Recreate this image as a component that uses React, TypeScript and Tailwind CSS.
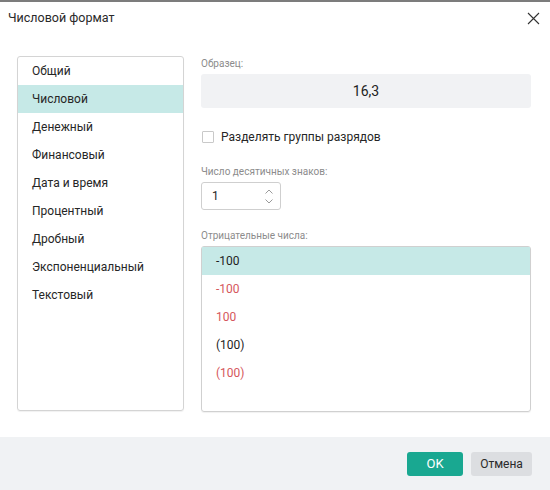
import { ReactNode } from "react";

// ── data ──────────────────────────────────────────────────────────────────────
const categories = [
  "Общий",
  "Числовой",
  "Денежный",
  "Финансовый",
  "Дата и время",
  "Процентный",
  "Дробный",
  "Экспоненциальный",
  "Текстовый",
];

const negatives: { label: string; red: boolean }[] = [
  { label: "-100", red: false },
  { label: "-100", red: true },
  { label: "100", red: true },
  { label: "(100)", red: false },
  { label: "(100)", red: true },
];

// ── FieldLabel ────────────────────────────────────────────────────────────────
function FieldLabel({ children }: { children: ReactNode }) {
  return <div className="text-[10px] leading-[13px] text-[#8c8c8c]">{children}</div>;
}

// ── Chevron ───────────────────────────────────────────────────────────────────
function Chevron({ up }: { up?: boolean }) {
  return (
    <svg width="8" height="5" viewBox="0 0 8 5" fill="none">
      <path
        d={up ? "M0.5 4.5 L4 1 L7.5 4.5" : "M0.5 0.5 L4 4 L7.5 0.5"}
        stroke="#9a9a9a"
        strokeWidth="1"
      />
    </svg>
  );
}

export default function App() {
  return (
    <div className="w-[550px] h-[490px] bg-white flex flex-col border-t-2 border-[#7c7c7c] font-['Segoe_UI','Roboto',sans-serif] text-[12px] text-[#262626] overflow-hidden">
      {/* header */}
      <div className="h-[32px] flex items-center justify-between pl-2 pr-[10px]">
        <span className="text-[12.5px] text-[#2a2a2a]">Числовой формат</span>
        <svg width="13" height="13" viewBox="0 0 13 13" fill="none">
          <path d="M1 1 L12 12 M12 1 L1 12" stroke="#333" strokeWidth="1.1" />
        </svg>
      </div>

      {/* body */}
      <div className="flex-1 flex gap-[17px] pl-[17px] pt-[22px]">
        {/* category list */}
        <div className="w-[167px] h-[355px] border border-[#d4d4d4] rounded-[3px] shadow-[0_1px_1px_rgba(0,0,0,0.06)]">
          {categories.map((c, i) => (
            <div
              key={c}
              className={`h-[28px] flex items-center pl-[14px] ${i === 1 ? "bg-[#c6e9e7]" : ""}`}
            >
              {c}
            </div>
          ))}
        </div>

        {/* settings */}
        <div className="w-[330px] flex flex-col">
          <div className="pt-[1px]">
            <FieldLabel>Образец:</FieldLabel>
          </div>
          <div className="mt-[4px] h-[34px] rounded-[3px] bg-[#f1f2f4] flex items-center justify-center text-[14px] text-[#222]">
            16,3
          </div>

          <div className="mt-[20px] flex items-center gap-[7px] pl-[1px]">
            <div className="w-[12px] h-[12px] border border-[#c9c9c9] rounded-[1px] bg-white" />
            <span>Разделять группы разрядов</span>
          </div>

          <div className="mt-[19px]">
            <FieldLabel>Число десятичных знаков:</FieldLabel>
          </div>
          <div className="mt-[4px] w-[80px] h-[28px] border border-[#cfcfcf] rounded-[3px] flex items-center justify-between pl-[10px] pr-[7px]">
            <span>1</span>
            <div className="flex flex-col gap-[5px]">
              <Chevron up />
              <Chevron />
            </div>
          </div>

          <div className="mt-[19px]">
            <FieldLabel>Отрицательные числа:</FieldLabel>
          </div>
          <div className="mt-[4px] h-[166px] border border-[#d0d0d0] rounded-[3px] shadow-[0_1px_1px_rgba(0,0,0,0.06)]">
            {negatives.map((n, i) => (
              <div
                key={i}
                className={`h-[28px] flex items-center pl-[14px] ${i === 0 ? "bg-[#c6e9e7]" : ""} ${
                  n.red ? "text-[#d5575c]" : "text-[#1e1e1e]"
                }`}
              >
                {n.label}
              </div>
            ))}
          </div>
        </div>
      </div>

      {/* footer */}
      <div className="h-[53px] bg-[#f0f2f4] flex items-center justify-end gap-[8px] pr-[18px]">
        <button className="w-[56px] h-[24px] rounded-[3px] bg-[#19a891] text-white text-[13px]">
          OK
        </button>
        <button className="w-[61px] h-[24px] rounded-[3px] bg-[#dcdee1] text-[#2a2a2a] text-[12px]">
          Отмена
        </button>
      </div>
    </div>
  );
}
